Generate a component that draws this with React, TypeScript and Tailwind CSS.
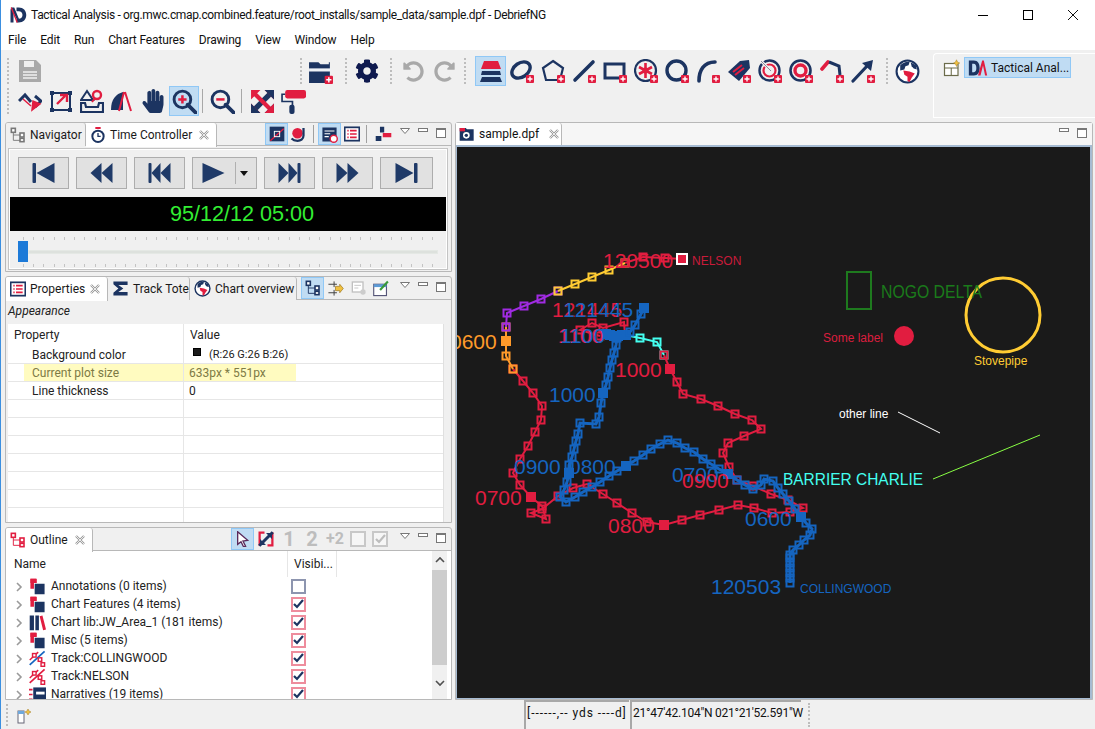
import type { ReactNode } from "react";
import { FaCog, FaHandPaper, FaRedoAlt, FaUndoAlt } from "react-icons/fa";

const NAVY = "#1c3461";
const RED = "#e11d40";
const BLUE = "#1565c0";

function Plus() {
  return (
    <g>
      <rect x="16" y="16" width="8" height="8" rx="1" fill={RED} />
      <path d="M20 17.5v5M17.5 20h5" stroke="#fff" strokeWidth="1.4" />
    </g>
  );
}

function Ico({ children, size = 24 }: { children: ReactNode; size?: number }) {
  return (
    <svg width={size} height={size} viewBox="0 0 24 24" fill="none" className="shrink-0">
      {children}
    </svg>
  );
}

function Btn({ selected, children, w = "w-[31px]" }: { selected?: boolean; children?: ReactNode; w?: string }) {
  return (
    <div className={`${w} h-[30px] flex items-center justify-center shrink-0 ${selected ? "bg-[#c0dcf3] border border-[#90c8f6]" : ""}`}>
      {children}
    </div>
  );
}

function Grip({ className = "" }: { className?: string }) {
  return <div className={`w-0 h-[26px] border-l-[2px] border-dotted border-[#bdbdbd] shrink-0 ${className}`} />;
}

function Globe({ size = 24 }: { size?: number }) {
  return (
    <Ico size={size}>
      <circle cx="12" cy="12" r="10.5" fill="#fff" stroke={NAVY} strokeWidth="2" />
      <path d="M5 6c3-3 7-4 9-3l-1 3-3 1-1 3-4 1z" fill={NAVY} />
      <path d="M15 3l5 3 1 4-3-1-2-2z" fill={NAVY} />
      <path d="M8 11l6 1 5 2-3 4-2 4-2-1 0-4-3-2z" fill={RED} />
    </Ico>
  );
}

function AppLogo() {
  return (
    <Ico size={18}>
      <path d="M10 2h3c6 0 10 4 10 10s-4 10-10 10h-3v-5h3c3 0 5-2 5-5s-2-5-5-5h-3z" fill={NAVY} />
      <path d="M3 2h4l7 17h-3L6 9v13H2V5z" fill={NAVY} />
      <path d="M3 2l8 20" stroke={RED} strokeWidth="1.8" />
    </Ico>
  );
}

function DaLogo() {
  return (
    <Ico size={20}>
      <path d="M1 3h6c5 0 7 4 7 9s-2 9-7 9H1zM5 7v10h2c2 0 3-2 3-5s-1-5-3-5z" fill={NAVY} />
      <path d="M12 21l5-18h2l4 18h-2.5L18 9l-3 12z" fill={RED} />
    </Ico>
  );
}

function MinMax() {
  return (
    <div className="flex items-center shrink-0">
      <svg width="12" height="8" className="mr-[7px] mb-[6px]">
        <path d="M1.5 1.5h9l-4.5 5z" fill="#fff" stroke="#777" />
      </svg>
      <div className="w-[10px] h-[4px] border border-[#777] bg-white mr-[8px] mb-[9px]" />
      <div className="w-[10px] h-[10px] border border-[#777] border-t-[2px] bg-white mr-[5px] mb-[3px]" />
    </div>
  );
}

function Tab({ icon, label, active, close, w }: { icon: ReactNode; label: string; active?: boolean; close?: boolean; w: string }) {
  return (
    <div className={`${w} h-[23px] flex items-center pl-[4px] gap-[4px] border-r border-[#b8b8b8] shrink-0 rounded-tr-[3px] ${active ? "bg-white h-[24px] z-10" : "bg-[#f0f0f0]"}`}>
      {icon}
      <span className="text-[#1a1a1a] whitespace-nowrap">{label}</span>
      {close && (
        <svg width="10" height="10" viewBox="0 0 10 10" className="ml-auto mr-[7px] shrink-0">
          <path d="M1 1l8 8M9 1l-8 8" stroke="#9a9a9a" strokeWidth="2.4" />
          <path d="M1 1l8 8M9 1l-8 8" stroke="#fff" strokeWidth="0.8" />
        </svg>
      )}
    </div>
  );
}

function Pane({ tabs, tools, children, h }: { tabs: ReactNode; tools?: ReactNode; children: ReactNode; h: string }) {
  return (
    <section className={`${h} border border-[#b8b8b8] rounded-t-[3px] flex flex-col bg-[#f0f0f0] overflow-hidden`}>
      <header className="h-[23px] flex items-start border-b border-[#b8b8b8] shrink-0">
        {tabs}
        <div className="ml-auto flex items-center h-[22px]">
          {tools}
          <MinMax />
        </div>
      </header>
      {children}
    </section>
  );
}

function Tool({ selected, children, w = "w-[23px]" }: { selected?: boolean; children?: ReactNode; w?: string }) {
  return (
    <div className={`${w} h-[22px] flex items-center justify-center shrink-0 ${selected ? "bg-[#c0dcf3] border border-[#90c8f6]" : ""}`}>
      {children}
    </div>
  );
}

const Sep = () => <div className="w-px h-[18px] bg-[#a0a0a0] mx-[4px] shrink-0" />;

function TreeIcon({ color = RED }: { color?: string }) {
  return (
    <Ico size={16}>
      <g stroke={color} strokeWidth="2.4" fill="#fff">
        <rect x="2" y="2" width="6" height="6" />
        <rect x="15" y="9" width="6" height="6" />
        <rect x="15" y="17" width="6" height="5" />
      </g>
      <path d="M5 8v12h10M5 12h10" stroke={color} strokeWidth="1.4" />
    </Ico>
  );
}

function ListIcon() {
  return (
    <Ico size={16}>
      <rect x="1" y="2" width="22" height="20" fill="#fff" stroke={NAVY} strokeWidth="2.6" />
      <path d="M5 7h2M9 7h10M5 12h2M9 12h10M5 17h2M9 17h10" stroke={RED} strokeWidth="2.4" />
    </Ico>
  );
}

function StopWatch() {
  return (
    <Ico size={16}>
      <rect x="8" y="0" width="8" height="3" fill={RED} />
      <circle cx="12" cy="14" r="8.5" fill="#fff" stroke={NAVY} strokeWidth="3" />
      <path d="M12 9v5h4" stroke={NAVY} strokeWidth="2" />
    </Ico>
  );
}

function Transport({ kind }: { kind: string }) {
  const shapes: Record<string, ReactNode> = {
    first: <><rect x="1" y="2" width="3.5" height="20" rx="1" /><path d="M23 2v20L5 12z" /></>,
    back: <><path d="M12 2v20L1 12z" /><path d="M23 2v20L12 12z" /></>,
    prev: <><rect x="1" y="2" width="3" height="20" rx="1" /><path d="M13 2v20L4 12z" /><path d="M23 2v20l-10-10z" /></>,
    play: <path d="M1 2v20l22-10z" />,
    next: <><rect x="20" y="2" width="3" height="20" rx="1" /><path d="M11 2v20l9-10z" /><path d="M1 2v20l10-10z" /></>,
    fwd: <><path d="M12 2v20l11-10z" /><path d="M1 2v20l11-10z" /></>,
    last: <><rect x="19.5" y="2" width="3.5" height="20" rx="1" /><path d="M1 2v20l18-10z" /></>,
  };
  return (
    <svg width="25" height="24" viewBox="0 0 24 24" fill="#1f3a68">
      {shapes[kind]}
    </svg>
  );
}

function TransportButton({ kind, w = "w-[51px]", children }: { kind: string; w?: string; children?: ReactNode }) {
  return (
    <div className={`${w} h-[32px] bg-[#e1e1e1] border border-[#adadad] flex items-center justify-center shrink-0`}>
      <Transport kind={kind} />
      {children}
    </div>
  );
}

function Ticks({ className }: { className: string }) {
  return (
    <div className={`flex justify-between ml-[13px] w-[410px] h-[3px] ${className}`}>
      {Array.from({ length: 41 }, (_, i) => (
        <span key={i} className="w-px h-[3px] bg-[#c4c4c4]" />
      ))}
    </div>
  );
}

function TimeController() {
  return (
    <div className="ml-[2px] mr-[3px] mt-[2px] h-[122px] border border-[#c4c4c4]">
      <div className="h-full border border-white flex flex-col">
        <div className="h-[47px] pl-[8px] pt-[7px] flex gap-[7px]">
          <TransportButton kind="first" />
          <TransportButton kind="back" />
          <TransportButton kind="prev" />
          <TransportButton kind="play" w="w-[65px]">
            <div className="w-px h-[22px] bg-[#b0b0b0] ml-[9px] mr-[4px]" />
            <svg width="8" height="5"><path d="M0 0h8L4 5z" fill="#111" /></svg>
          </TransportButton>
          <TransportButton kind="next" />
          <TransportButton kind="fwd" />
          <TransportButton kind="last" w="w-[53px]" />
        </div>
        <div className="h-[34px] bg-black flex items-center justify-center pl-[28px] text-[21.6px] text-[#33ee33] font-['Liberation_Sans',sans-serif]">
          95/12/12 05:00
        </div>
        <div className="flex-1 flex flex-col">
          <Ticks className="mt-[6px]" />
          <div className="flex items-center ml-[8px] mr-[8px] h-[21px] mt-[1px]">
            <div className="w-[10px] h-[21px] bg-[#1c7ad8]" />
            <div className="flex-1 h-[4px] bg-[#dde1dd] border border-[#e4e8e4]" />
          </div>
          <Ticks className="mt-[2px]" />
        </div>
      </div>
    </div>
  );
}

function PropRow({ name, value, swatch, highlight }: { name?: string; value?: string; swatch?: boolean; highlight?: boolean }) {
  return (
    <div className="h-[18px] flex border-b border-[#e6e6e6] bg-white shrink-0">
      <div className="w-[176px] border-r border-[#e6e6e6] pl-[16px] shrink-0">
        <div className={`h-full pl-[8px] flex items-center ${highlight ? "bg-[#fffbc0] text-[#7d7a45]" : "text-[#222]"}`}>{name}</div>
      </div>
      <div className={`${highlight ? "w-[112px] bg-[#fffbc0] text-[#7d7a45]" : "text-[#222]"} pl-[5px] flex items-center`}>
        {swatch && <span className="w-[8px] h-[8px] bg-[#1a1a1a] border border-black mr-[8px] mb-[6px] ml-[4px]" />}
        <span className={swatch ? "text-[11px]" : ""}>{value}</span>
      </div>
    </div>
  );
}

function PropertiesBody() {
  return (
    <div className="flex-1 flex flex-col min-h-0">
      <div className="h-[24px] flex items-center pl-[2px] pb-[2px] italic text-[#222]">Appearance</div>
      <div className="ml-[2px] mr-[7px] flex-1 flex flex-col overflow-hidden bg-white border-r border-[#e0e0e0]">
        <div className="h-[22px] flex items-center shrink-0 text-[#222]">
          <div className="w-[176px] pl-[6px] border-r border-[#e6e6e6] h-full flex items-center">Property</div>
          <div className="pl-[6px]">Value</div>
        </div>
        <PropRow name="Background color" value="(R:26 G:26 B:26)" swatch />
        <PropRow name="Current plot size" value="633px * 551px" highlight />
        <PropRow name="Line thickness" value="0" />
        {Array.from({ length: 7 }, (_, i) => (
          <PropRow key={i} />
        ))}
      </div>
    </div>
  );
}

function Stack() {
  return (
    <Ico size={17}>
      <path d="M2 1h9v6H2z" fill={RED} />
      <path d="M8 8h14v15H8z" fill={NAVY} />
      <path d="M2 1h8v5H7v9H2z" fill={RED} />
    </Ico>
  );
}

function TrackIcon({ color }: { color: string }) {
  return (
    <Ico size={17}>
      <path d="M1 21L22 2" stroke={color} strokeWidth="2.4" />
      <path d="M1 14L13 3" stroke={RED} strokeWidth="2" />
      <rect x="5" y="5" width="5" height="5" fill="#fff" stroke={RED} strokeWidth="2" />
      <rect x="13" y="11" width="5" height="5" fill="#fff" stroke={RED} strokeWidth="2" />
      <rect x="17" y="18" width="5" height="5" fill="#fff" stroke={RED} strokeWidth="2" />
    </Ico>
  );
}

const outlineRows: { label: string; icon: ReactNode; checked: boolean }[] = [
  { label: "Annotations (0 items)", icon: <Stack />, checked: false },
  { label: "Chart Features (4 items)", icon: <Stack />, checked: true },
  {
    label: "Chart lib:JW_Area_1 (181 items)",
    icon: (
      <Ico size={17}>
        <path d="M1 2h6v21H1zM9 2h5v21H9z" fill={NAVY} />
        <path d="M15 3l4-1 5 20-4 1z" fill={RED} />
      </Ico>
    ),
    checked: true,
  },
  { label: "Misc (5 items)", icon: <Stack />, checked: true },
  { label: "Track:COLLINGWOOD", icon: <TrackIcon color={BLUE} />, checked: true },
  { label: "Track:NELSON", icon: <TrackIcon color={RED} />, checked: true },
  {
    label: "Narratives (19 items)",
    icon: (
      <Ico size={17}>
        <rect x="6" y="2" width="18" height="20" fill={NAVY} />
        <rect x="10" y="8" width="12" height="4" fill="#fff" />
        <path d="M0 5h5M0 12h5M0 19h5" stroke={RED} strokeWidth="2.4" />
      </Ico>
    ),
    checked: true,
  },
];

function OutlineBody() {
  return (
    <div className="flex-1 flex min-h-0 pl-[2px] bg-white overflow-hidden">
      <div className="w-[424px] shrink-0 flex flex-col">
        <div className="h-[26px] flex items-center shrink-0 text-[#222]">
          <div className="w-[279px] pl-[6px]">Name</div>
          <div className="w-[50px] h-full pl-[6px] flex items-center border-x border-[#e6e6e6]">Visibi...</div>
        </div>
        {outlineRows.map((r) => (
          <div key={r.label} className="h-[18px] flex items-center shrink-0 text-[#222]">
            <svg width="8" height="10" className="ml-[7px] mr-[6px] mt-[2px] shrink-0">
              <path d="M2 1l4 4-4 4" fill="none" stroke="#9a9a9a" strokeWidth="1.6" />
            </svg>
            <div className="w-[22px] shrink-0">{r.icon}</div>
            <span className="w-[240px] whitespace-nowrap">{r.label}</span>
            <div className={`w-[15px] h-[15px] bg-white border-2 flex items-center justify-center shrink-0 ${r.checked ? "border-[#ee8d9d]" : "border-[#8d95af]"}`}>
              {r.checked && (
                <svg width="11" height="10" viewBox="0 0 11 10">
                  <path d="M1 5l3 3 6-7" fill="none" stroke={NAVY} strokeWidth="2.2" />
                </svg>
              )}
            </div>
          </div>
        ))}
      </div>
      <div className="w-[15px] shrink-0 bg-[#f0f0f0] flex flex-col items-center">
        <svg width="10" height="19" className="shrink-0">
          <path d="M1 11l4-4 4 4" fill="none" stroke="#505050" strokeWidth="1.6" />
        </svg>
        <div className="w-full h-[95px] bg-[#cdcdcd] shrink-0" />
        <svg width="10" height="19" className="shrink-0 mt-[8px]">
          <path d="M1 8l4 4 4-4" fill="none" stroke="#505050" strokeWidth="1.6" />
        </svg>
      </div>
    </div>
  );
}

type Pt = [number, number, boolean?];

const nelson: { color: string; pts: Pt[] }[] = [
  { color: RED, pts: [[682, 259], [665, 258], [643, 257], [625, 263]] },
  { color: "#ffcc33", pts: [[625, 263], [609, 270], [592, 277], [575, 284], [558, 291]] },
  { color: "#a02be2", pts: [[558, 291], [541, 299], [524, 306], [507, 313], [506, 327]] },
  { color: "#ff9a2a", pts: [[506, 327], [506, 341, true], [506, 356], [513, 369]] },
  {
    color: RED,
    pts: [
      [513, 369], [523, 381], [533, 393], [542, 406], [541, 420], [535, 432], [528, 446], [520, 459], [513, 473], [520, 485],
      [531, 497, true], [542, 506], [546, 519], [531, 513], [542, 509], [558, 496], [573, 488], [587, 484], [603, 494], [617, 503],
      [632, 513], [647, 522], [664, 525, true], [682, 520], [700, 515], [719, 510], [738, 505], [754, 508], [772, 513], [790, 512],
      [803, 508], [788, 500], [771, 494], [753, 486], [737, 480], [729, 467], [723, 453], [728, 443], [744, 436], [761, 429],
      [752, 420], [735, 414], [718, 406], [701, 399], [683, 394], [677, 382], [670, 369, true], [664, 355],
    ],
  },
  { color: "#44fff0", pts: [[664, 355], [657, 342], [640, 338], [625, 335]] },
  { color: RED, pts: [[625, 335], [624, 322], [603, 328], [592, 323], [580, 330], [600, 336]] },
];

const collingwood: Pt[] = [
  [790, 583], [790, 578], [790, 573], [790, 568], [790, 563], [790, 558], [790, 555], [793, 550], [799, 545], [804, 540], [810, 535], [812, 529],
  [806, 523], [801, 517, true], [795, 509], [789, 501], [783, 494], [778, 488], [773, 481], [764, 479], [761, 485], [753, 489], [745, 485], [737, 480],
  [728, 474, true], [719, 469], [711, 464], [703, 459], [694, 452], [685, 448], [677, 443], [668, 440], [660, 444], [651, 449], [643, 455], [634, 461],
  [626, 466, true], [617, 471], [609, 476], [600, 482], [592, 487], [583, 492], [575, 497], [566, 502], [560, 497], [564, 490], [567, 482], [569, 473, true], [569, 465],
  [572, 457], [574, 449], [576, 441], [578, 434], [580, 423], [596, 424], [599, 417], [601, 403], [603, 393, true], [606, 385], [608, 377], [610, 368],
  [612, 360], [614, 353], [616, 345], [617, 338], [606, 334, true], [610, 335, true], [614, 336, true], [618, 336, true], [622, 335, true], [626, 335, true], [630, 332], [635, 325], [641, 314], [644, 308, true],
];

const labels: { x: number; y: number; t: string; c: string; s: number; fit?: number }[] = [
  { x: 603, y: 268, t: "120500", c: RED, s: 21 },
  { x: 692, y: 265, t: "NELSON", c: "#c91b3a", s: 12 },
  { x: 552, y: 317, t: "121445", c: RED, s: 21 },
  { x: 563, y: 317, t: "121445", c: BLUE, s: 21 },
  { x: 558, y: 343, t: "1100", c: RED, s: 21 },
  { x: 560, y: 343, t: "1100", c: BLUE, s: 21 },
  { x: 450, y: 349, t: "0600", c: "#ff9a2a", s: 21 },
  { x: 615, y: 377, t: "1000", c: RED, s: 21 },
  { x: 549, y: 402, t: "1000", c: BLUE, s: 21 },
  { x: 514, y: 474, t: "0900", c: BLUE, s: 21 },
  { x: 569, y: 474, t: "0800", c: BLUE, s: 21 },
  { x: 475, y: 505, t: "0700", c: RED, s: 21 },
  { x: 608, y: 533, t: "0800", c: RED, s: 21 },
  { x: 672, y: 482, t: "0700", c: BLUE, s: 21 },
  { x: 682, y: 488, t: "0900", c: RED, s: 21 },
  { x: 745, y: 526, t: "0600", c: BLUE, s: 21 },
  { x: 711, y: 594, t: "120503", c: BLUE, s: 21 },
  { x: 800, y: 593, t: "COLLINGWOOD", c: BLUE, s: 12 },
  { x: 881, y: 298, t: "NOGO DELTA", c: "#1a7a1a", s: 18, fit: 101 },
  { x: 823, y: 342, t: "Some label", c: "#dc1e3e", s: 12 },
  { x: 974, y: 365, t: "Stovepipe", c: "#ffcc33", s: 12 },
  { x: 839, y: 418, t: "other line", c: "#ffffff", s: 12 },
  { x: 783, y: 485, t: "BARRIER CHARLIE", c: "#44fff0", s: 16.5, fit: 140 },
];

function Track({ color, pts, width = 2 }: { color: string; pts: Pt[]; width?: number }) {
  return (
    <g>
      <polyline points={pts.map((p) => `${p[0]},${p[1]}`).join(" ")} fill="none" stroke={color} strokeWidth={width} />
      {pts.map((p, i) =>
        p[2] ? (
          <rect key={i} x={p[0] - 5} y={p[1] - 5} width="10" height="10" fill={color} />
        ) : (
          <rect key={i} x={p[0] - 3.5} y={p[1] - 3.5} width="7" height="7" fill="none" stroke={color} strokeWidth="2" />
        ),
      )}
    </g>
  );
}

function Plot() {
  return (
    <div className="w-[633px] h-[551px] bg-[#1a1a1a] shrink-0">
      <svg width="633" height="551" viewBox="457 147 633 551" className="block font-['Liberation_Sans',sans-serif]">
        {[...nelson].reverse().map((s) => (
          <Track key={s.color + s.pts[0][0]} color={s.color} pts={s.pts} />
        ))}
        <Track color={BLUE} pts={collingwood} width={3} />
        <rect x="677" y="254" width="10" height="10" fill={RED} stroke="#fff" strokeWidth="2" />
        <rect x="847" y="272" width="24" height="37" fill="none" stroke="#1e7a1e" strokeWidth="2" />
        <circle cx="904" cy="336" r="10" fill={RED} />
        <circle cx="1003" cy="315" r="37" fill="none" stroke="#ffcc33" strokeWidth="3" />
        <line x1="898" y1="412" x2="940" y2="433" stroke="#fff" />
        <line x1="933" y1="479" x2="1040" y2="435" stroke="#88ff44" />
        {labels.map((l) => (
          <text key={l.x + l.t} x={l.x} y={l.y} fill={l.c} fontSize={l.s} textLength={l.fit} lengthAdjust={l.fit ? "spacingAndGlyphs" : undefined}>
            {l.t}
          </text>
        ))}
      </svg>
    </div>
  );
}

function ToolbarRowOne() {
  return (
    <div className="h-[30px] flex items-center pl-[6px]">
      <Grip />
      <div className="ml-[5px]">
        <Btn>
          <Ico size={24}>
            <path d="M1 1h17l5 5v17H1z" fill="#a9a9a9" />
            <rect x="6" y="2" width="10" height="6" fill="#efefef" />
            <path d="M5 13h14M5 16h14M5 19h14" stroke="#efefef" strokeWidth="1.5" />
          </Ico>
        </Btn>
      </div>
      <Grip className="ml-[255px]" />
      <div className="ml-[3px]">
        <Btn>
          <Ico size={25}>
            <path d="M1 3h9l2 2h8v-2h1v20H1z" fill={NAVY} />
            <path d="M1 9h21v3H1z" fill="#eef1f6" />
            <Plus />
          </Ico>
        </Btn>
      </div>
      <Grip className="ml-[9px]" />
      <div className="ml-[4px]">
        <Btn><FaCog size={24} color="#0f1a4f" /></Btn>
      </div>
      <Grip className="ml-[8px]" />
      <div className="ml-[6px] flex">
        <Btn w="w-[31px]"><FaUndoAlt size={21} color="#a9a9a9" /></Btn>
        <Btn w="w-[30px]"><FaRedoAlt size={21} color="#a9a9a9" /></Btn>
      </div>
      <Grip className="ml-[5px]" />
      <div className="ml-[9px] flex">
        <Btn selected>
          <Ico size={24}>
            <path d="M5 2h14l3 8H2z" fill={RED} />
            <path d="M3 12h18l1 4H2z" fill={NAVY} />
            <path d="M3 18h18l2 5H1z" fill={NAVY} />
          </Ico>
        </Btn>
        <Btn><Ico><ellipse cx="11" cy="11" rx="10" ry="7" transform="rotate(-35 11 11)" stroke={NAVY} strokeWidth="3.4" /><Plus /></Ico></Btn>
        <Btn><Ico><path d="M12 2l10 7-3 12H5L2 9z" stroke={NAVY} strokeWidth="2.2" /><Plus /></Ico></Btn>
        <Btn><Ico><path d="M3 21L21 3" stroke={NAVY} strokeWidth="3.6" strokeLinecap="round" /><Plus /></Ico></Btn>
        <Btn><Ico><rect x="2" y="5" width="19" height="14" stroke={NAVY} strokeWidth="3" /><Plus /></Ico></Btn>
        <Btn>
          <Ico>
            <circle cx="11.5" cy="11.5" r="10.5" stroke={NAVY} strokeWidth="2.2" />
            <path d="M11.5 4v15M5 8l13 7M5 15l13-7" stroke={RED} strokeWidth="2.6" />
            <circle cx="11.5" cy="11.5" r="3" fill={RED} />
            <Plus />
          </Ico>
        </Btn>
        <Btn><Ico><circle cx="11.5" cy="11.5" r="9.5" stroke={NAVY} strokeWidth="3.4" /><Plus /></Ico></Btn>
        <Btn><Ico><path d="M3 22C3 11 8 3 19 3" stroke={NAVY} strokeWidth="3.6" strokeLinecap="round" /><Plus /></Ico></Btn>
        <Btn>
          <Ico>
            <path d="M1 13L13 2l9-1 1 8-11 13z" fill={NAVY} />
            <path d="M6 13l9-7M8 16l9-7" stroke={RED} strokeWidth="2" />
            <Plus />
          </Ico>
        </Btn>
        <Btn>
          <Ico>
            <circle cx="11.5" cy="11.5" r="10" stroke={NAVY} strokeWidth="2.4" />
            <circle cx="11.5" cy="11.5" r="6" stroke={RED} strokeWidth="2.2" />
            <path d="M3 2l10 10" stroke="#eee" strokeWidth="3" />
            <path d="M3 2l10 10" stroke="#8a8a9a" strokeWidth="1" />
            <Plus />
          </Ico>
        </Btn>
        <Btn>
          <Ico>
            <circle cx="11.5" cy="11.5" r="10" stroke={NAVY} strokeWidth="2.6" />
            <circle cx="11.5" cy="11.5" r="5.5" stroke={RED} strokeWidth="3.4" />
            <Plus />
          </Ico>
        </Btn>
        <Btn>
          <Ico>
            <path d="M2 10l6-7" stroke={RED} strokeWidth="3.6" strokeLinecap="round" />
            <path d="M9 3l10 4 1 9" stroke={NAVY} strokeWidth="3" />
            <Plus />
          </Ico>
        </Btn>
        <Btn>
          <Ico>
            <path d="M2 22L17 6" stroke={NAVY} strokeWidth="3.2" strokeLinecap="round" />
            <path d="M11 4l11-3-2 11z" fill={NAVY} />
            <Plus />
          </Ico>
        </Btn>
      </div>
      <Grip className="ml-[8px]" />
      <div className="ml-[4px]">
        <Btn><Globe size={25} /></Btn>
      </div>
    </div>
  );
}

function ZoomGlass({ plus }: { plus?: boolean }) {
  return (
    <Ico size={25}>
      <circle cx="10" cy="10" r="8" fill="none" stroke={NAVY} strokeWidth="2.8" />
      <path d="M15 15l8 8" stroke={NAVY} strokeWidth="3.6" strokeLinecap="round" />
      <path d={plus ? "M6 10h8M10 6v8" : "M6 10h8"} stroke={RED} strokeWidth="2.4" />
    </Ico>
  );
}

function ToolbarRowTwo() {
  return (
    <div className="h-[30px] flex items-center pl-[6px]">
      <Grip />
      <div className="ml-[6px] flex">
        <Btn w="w-[30px]">
          <Ico>
            <path d="M1 12l6-6 6 7M17 7l6 5-6 6" stroke={NAVY} strokeWidth="3" />
            <path d="M5 10l8 7M14 21l1-9 7 3z" stroke={RED} fill={RED} strokeWidth="1.5" />
          </Ico>
        </Btn>
        <Btn w="w-[31px]">
          <Ico>
            <rect x="3" y="4" width="18" height="17" stroke={NAVY} strokeWidth="2" />
            <path d="M1 2h4v4H1zM19 2h4v4h-4zM1 19h4v4H1zM19 19h4v4h-4z" fill={NAVY} />
            <path d="M8 15l8-8M11 6h7v7" stroke={RED} strokeWidth="2.4" />
          </Ico>
        </Btn>
        <Btn w="w-[31px]">
          <Ico>
            <path d="M7 2l6 9H1z" stroke={NAVY} strokeWidth="2" />
            <circle cx="17" cy="6" r="4" stroke={RED} strokeWidth="2.4" />
            <path d="M15 9l-3 4" stroke={RED} strokeWidth="2" />
            <path d="M1 14h4l1 4h12l1-4h4v9H1z" fill="none" stroke={NAVY} strokeWidth="2.2" />
          </Ico>
        </Btn>
        <Btn w="w-[30px]">
          <Ico>
            <path d="M1 21C1 10 6 5 13 3v18z" fill={NAVY} />
            <path d="M14 3l-5 19M15 3l6 19" stroke={RED} strokeWidth="2" />
          </Ico>
        </Btn>
        <Btn w="w-[32px]"><FaHandPaper size={24} color={NAVY} /></Btn>
        <Btn selected w="w-[30px]"><ZoomGlass plus /></Btn>
      </div>
      <div className="w-px h-[24px] bg-[#a8a8a8] ml-[3px] mr-[4px]" />
      <Btn w="w-[31px]"><ZoomGlass /></Btn>
      <div className="w-px h-[24px] bg-[#a8a8a8] ml-[3px] mr-[5px]" />
      <Btn w="w-[31px]">
        <Ico size={25}>
          <path d="M4 20L20 4" stroke={NAVY} strokeWidth="5" />
          <path d="M4 4l16 16" stroke={RED} strokeWidth="4" />
          <path d="M1 1h9L1 10zM23 1v9l-9-9zM1 23v-9l9 9z" fill={RED} />
          <path d="M14 1h9v9zM1 14v9h9zM23 23h-9l9-9z" fill={NAVY} />
          <path d="M14 23h9v-9z" fill={RED} />
        </Ico>
      </Btn>
      <Btn w="w-[31px]">
        <Ico size={25}>
          <rect x="4" y="1" width="20" height="8" rx="2" fill={RED} />
          <path d="M4 5H1v7h10v4" stroke={NAVY} strokeWidth="1.6" />
          <rect x="8" y="15" width="5" height="9" rx="2" fill={NAVY} />
        </Ico>
      </Btn>
    </div>
  );
}

export default function App() {
  return (
    <div className="w-[1095px] h-[729px] overflow-hidden bg-[#f0f0f0] border-l border-[#3b8fe0] flex flex-col text-[12px] leading-none font-['Roboto',sans-serif] text-[#111]">
      <div className="h-[30px] bg-white flex items-center shrink-0 pl-[8px] pr-[0px]">
        <AppLogo />
        <span className="ml-[4px] whitespace-nowrap tracking-[-0.35px]">Tactical Analysis - org.mwc.cmap.combined.feature/root_installs/sample_data/sample.dpf - DebriefNG</span>
        <div className="ml-auto flex items-center">
          <div className="w-[45px] flex justify-center"><div className="w-[10px] h-px bg-black" /></div>
          <div className="w-[45px] flex justify-center"><div className="w-[10px] h-[10px] border border-black" /></div>
          <div className="w-[45px] flex justify-center">
            <svg width="10" height="10"><path d="M0 0l10 10M10 0L0 10" stroke="#111" /></svg>
          </div>
        </div>
      </div>
      <nav className="h-[20px] bg-white flex items-center gap-[14px] pl-[7px] shrink-0 tracking-[-0.15px]">
        {["File", "Edit", "Run", "Chart Features", "Drawing", "View", "Window", "Help"].map((m) => (
          <span key={m}>{m}</span>
        ))}
      </nav>
      <div className="h-[72px] flex shrink-0">
        <div className="w-[932px] pt-[6px] shrink-0">
          <ToolbarRowOne />
          <ToolbarRowTwo />
        </div>
        <div className="flex-1 mt-[3px] mb-[4px] border-l border-t border-b border-white rounded-tl-[4px] pl-[9px] pt-[3px]">
          <div className="flex items-center gap-[3px]">
            <Ico size={18}>
              <rect x="2" y="6" width="18" height="16" fill="#fff" stroke="#6b6b4a" strokeWidth="1.6" />
              <path d="M2 12h18M11 12v10" stroke="#6b6b4a" strokeWidth="1.4" />
              <path d="M18 1l1.4 3 3 1.4-3 1.4L18 10l-1.4-3.2L14 5.4l2.6-1.4z" fill="#f0c040" stroke="#a07a20" strokeWidth=".6" />
            </Ico>
            <div className="w-[107px] h-[21px] bg-[#c0dcf3] border border-[#90c8f6] flex items-center pl-[3px] gap-[3px] whitespace-nowrap">
              <DaLogo />
              <span>Tactical Anal...</span>
            </div>
          </div>
        </div>
      </div>
      <main className="h-[578px] flex pl-[4px] gap-[3px] shrink-0">
        <div className="w-[447px] flex flex-col gap-[4px] shrink-0">
          <Pane
            h="h-[150px]"
            tabs={
              <>
                <Tab w="w-[80px]" icon={<TreeIcon color="#777" />} label="Navigator" />
                <Tab w="w-[131px]" active close icon={<StopWatch />} label="Time Controller" />
              </>
            }
            tools={
              <>
                <Tool selected>
                  <Ico size={16}><rect x="1" y="1" width="22" height="22" fill={NAVY} /><path d="M2 22L22 4" stroke={RED} strokeWidth="2" /><rect x="8" y="8" width="8" height="8" fill="none" stroke="#fff" strokeWidth="1.4" /></Ico>
                </Tool>
                <Tool w="w-[21px]">
                  <Ico size={18}><circle cx="10" cy="11" r="7" fill={RED} /><path d="M18 4v10c0 5-4 7-8 7s-6-1-8-3" stroke={NAVY} strokeWidth="3" /></Ico>
                </Tool>
                <Sep />
                <Tool selected>
                  <Ico size={17}><path d="M2 2h20v20H2z" fill={NAVY} /><path d="M5 7h14M5 11h8M5 15h6" stroke="#fff" strokeWidth="1.6" /><circle cx="18" cy="18" r="5" fill="#fff" stroke={RED} strokeWidth="2" /></Ico>
                </Tool>
                <Tool w="w-[21px]"><ListIcon /></Tool>
                <Sep />
                <Tool w="w-[24px]">
                  <Ico size={17}><path d="M7 1h6v8H7zM1 14h8v7H1z" fill={NAVY} /><path d="M11 10h12v6H11z" fill={RED} /></Ico>
                </Tool>
                <div className="w-[4px]" />
              </>
            }
          >
            <TimeController />
          </Pane>
          <Pane
            h="h-[247px]"
            tabs={
              <>
                <Tab w="w-[102px]" active close icon={<ListIcon />} label="Properties" />
                <Tab w="w-[82px]" icon={<Ico size={17}><path d="M2 2h20v5H9l7 5-7 5h13v5H2v-4l7-6-7-6z" fill={NAVY} /></Ico>} label="Track Tote" />
                <Tab w="w-[107px]" icon={<Globe size={17} />} label="Chart overview" />
              </>
            }
            tools={
              <>
                <Tool selected><TreeIcon color={NAVY} /></Tool>
                <Tool>
                  <Ico size={17}><path d="M2 6h12M10 2v8M2 18h12M10 14v8" stroke="#444" strokeWidth="1.4" /><path d="M12 9h6V6l5 6-5 6v-3h-6z" fill="#f0c040" stroke="#a07a20" /></Ico>
                </Tool>
                <Tool>
                  <Ico size={16}><rect x="2" y="3" width="16" height="15" fill="#fff" stroke="#c0c0c0" strokeWidth="2" /><path d="M5 8h10M5 12h6" stroke="#c8c8c8" strokeWidth="1.5" /><circle cx="18" cy="18" r="4" fill="#ccc" /></Ico>
                </Tool>
                <Tool>
                  <Ico size={17}><rect x="1" y="6" width="18" height="16" fill="#fff" stroke="#557" strokeWidth="1.6" /><rect x="1" y="6" width="18" height="4" fill="#5c9bd6" /><path d="M10 14L21 2" stroke="#3a9a3a" strokeWidth="3" /></Ico>
                </Tool>
                <div className="w-[6px]" />
              </>
            }
          >
            <PropertiesBody />
          </Pane>
          <Pane
            h="h-[173px]"
            tabs={<Tab w="w-[87px]" active close icon={<TreeIcon />} label="Outline" />}
            tools={
              <>
                <Tool selected>
                  <Ico size={16}><path d="M4 1l15 13-7 1 4 8-3 1-4-8-5 4z" fill="#fff" stroke="#5a2a5a" strokeWidth="2" /></Ico>
                </Tool>
                <Tool>
                  <Ico size={18}><path d="M2 2h8v3H5v16h-3zM22 22h-8v-3h5V3h3z" fill={RED} /><path d="M3 21L21 3" stroke={NAVY} strokeWidth="4" /><path d="M12 4h8v8zM4 12v8h8z" fill={NAVY} /></Ico>
                </Tool>
                <span className="w-[24px] text-center text-[20px] font-bold text-[#bdbdbd]">1</span>
                <span className="w-[22px] text-center text-[20px] font-bold text-[#bdbdbd]">2</span>
                <span className="w-[24px] text-center text-[16px] font-bold text-[#bdbdbd]">+2</span>
                <div className="w-[16px] h-[16px] border-2 border-[#c8c8c8] bg-[#f6f6f6] mx-[3px]" />
                <div className="w-[16px] h-[16px] border-2 border-[#c8c8c8] bg-[#f6f6f6] mx-[3px] flex items-center justify-center">
                  <svg width="11" height="10" viewBox="0 0 11 10"><path d="M1 5l3 3 6-7" fill="none" stroke="#bdbdbd" strokeWidth="2.2" /></svg>
                </div>
                <div className="w-[8px]" />
              </>
            }
          >
            <OutlineBody />
          </Pane>
        </div>
        <section className="w-[638px] h-[578px] border border-[#b8b8b8] rounded-t-[3px] flex flex-col shrink-0 bg-[#a6bbd2]">
          <header className="h-[22px] bg-[#f6f6f6] flex shrink-0">
            <div className="w-[106px] h-[22px] bg-white border-r border-[#b8b8b8] flex items-center pl-[3px] gap-[4px] rounded-tr-[3px]">
              <Ico size={16}>
                <path d="M1 3h9l2 2h10v17H1z" fill={NAVY} />
                <path d="M1 3h8v5H1z" fill={RED} />
                <circle cx="11" cy="14" r="5" fill="#fff" />
                <circle cx="11" cy="14" r="2.5" fill={NAVY} />
              </Ico>
              <span className="whitespace-nowrap">sample.dpf</span>
              <svg width="10" height="10" viewBox="0 0 10 10" className="ml-[6px] shrink-0">
                <path d="M1 1l8 8M9 1l-8 8" stroke="#9a9a9a" strokeWidth="2.4" />
                <path d="M1 1l8 8M9 1l-8 8" stroke="#fff" strokeWidth="0.8" />
              </svg>
            </div>
            <div className="ml-auto flex items-center h-[22px]">
              <div className="w-[10px] h-[4px] border border-[#777] bg-white mr-[8px] mb-[9px]" />
              <div className="w-[10px] h-[10px] border border-[#777] border-t-[2px] bg-white mr-[5px] mb-[3px]" />
            </div>
          </header>
          <div className="pl-[1px] pt-[2px]">
            <Plot />
          </div>
        </section>
      </main>
      <footer className="h-[29px] flex items-center shrink-0">
        <div className="ml-[5px] w-0 h-[22px] border-l-[2px] border-dotted border-[#bdbdbd]" />
        <svg width="16" height="16" viewBox="0 0 16 16" className="ml-[9px] mt-[2px] shrink-0">
          <rect x="1" y="3" width="6" height="12" fill="#fff" stroke="#667" />
          <rect x="1" y="3" width="6" height="3" fill="#6fa8dc" />
          <path d="M11 1l1 2 2 1-2 1-1 2-1-2-2-1 2-1z" fill="#f0c040" stroke="#a07a20" strokeWidth=".5" />
        </svg>
        <div className="ml-[491px] w-[105px] h-[29px] border-l-2 border-t-2 border-[#a8a8a8] pl-[1px] pt-[5px] whitespace-nowrap tracking-[0.95px]">
          [------,-- yds ----d]
        </div>
        <div className="ml-[1px] w-[171px] h-[29px] border-l-2 border-t-2 border-[#a8a8a8] pl-[1px] pt-[5px] whitespace-nowrap tracking-[-0.25px]">
          21°47'42.104"N 021°21'52.591"W
        </div>
        <div className="ml-[7px] w-0 h-[24px] border-l-[2px] border-dotted border-[#bdbdbd]" />
      </footer>
    </div>
  );
}
